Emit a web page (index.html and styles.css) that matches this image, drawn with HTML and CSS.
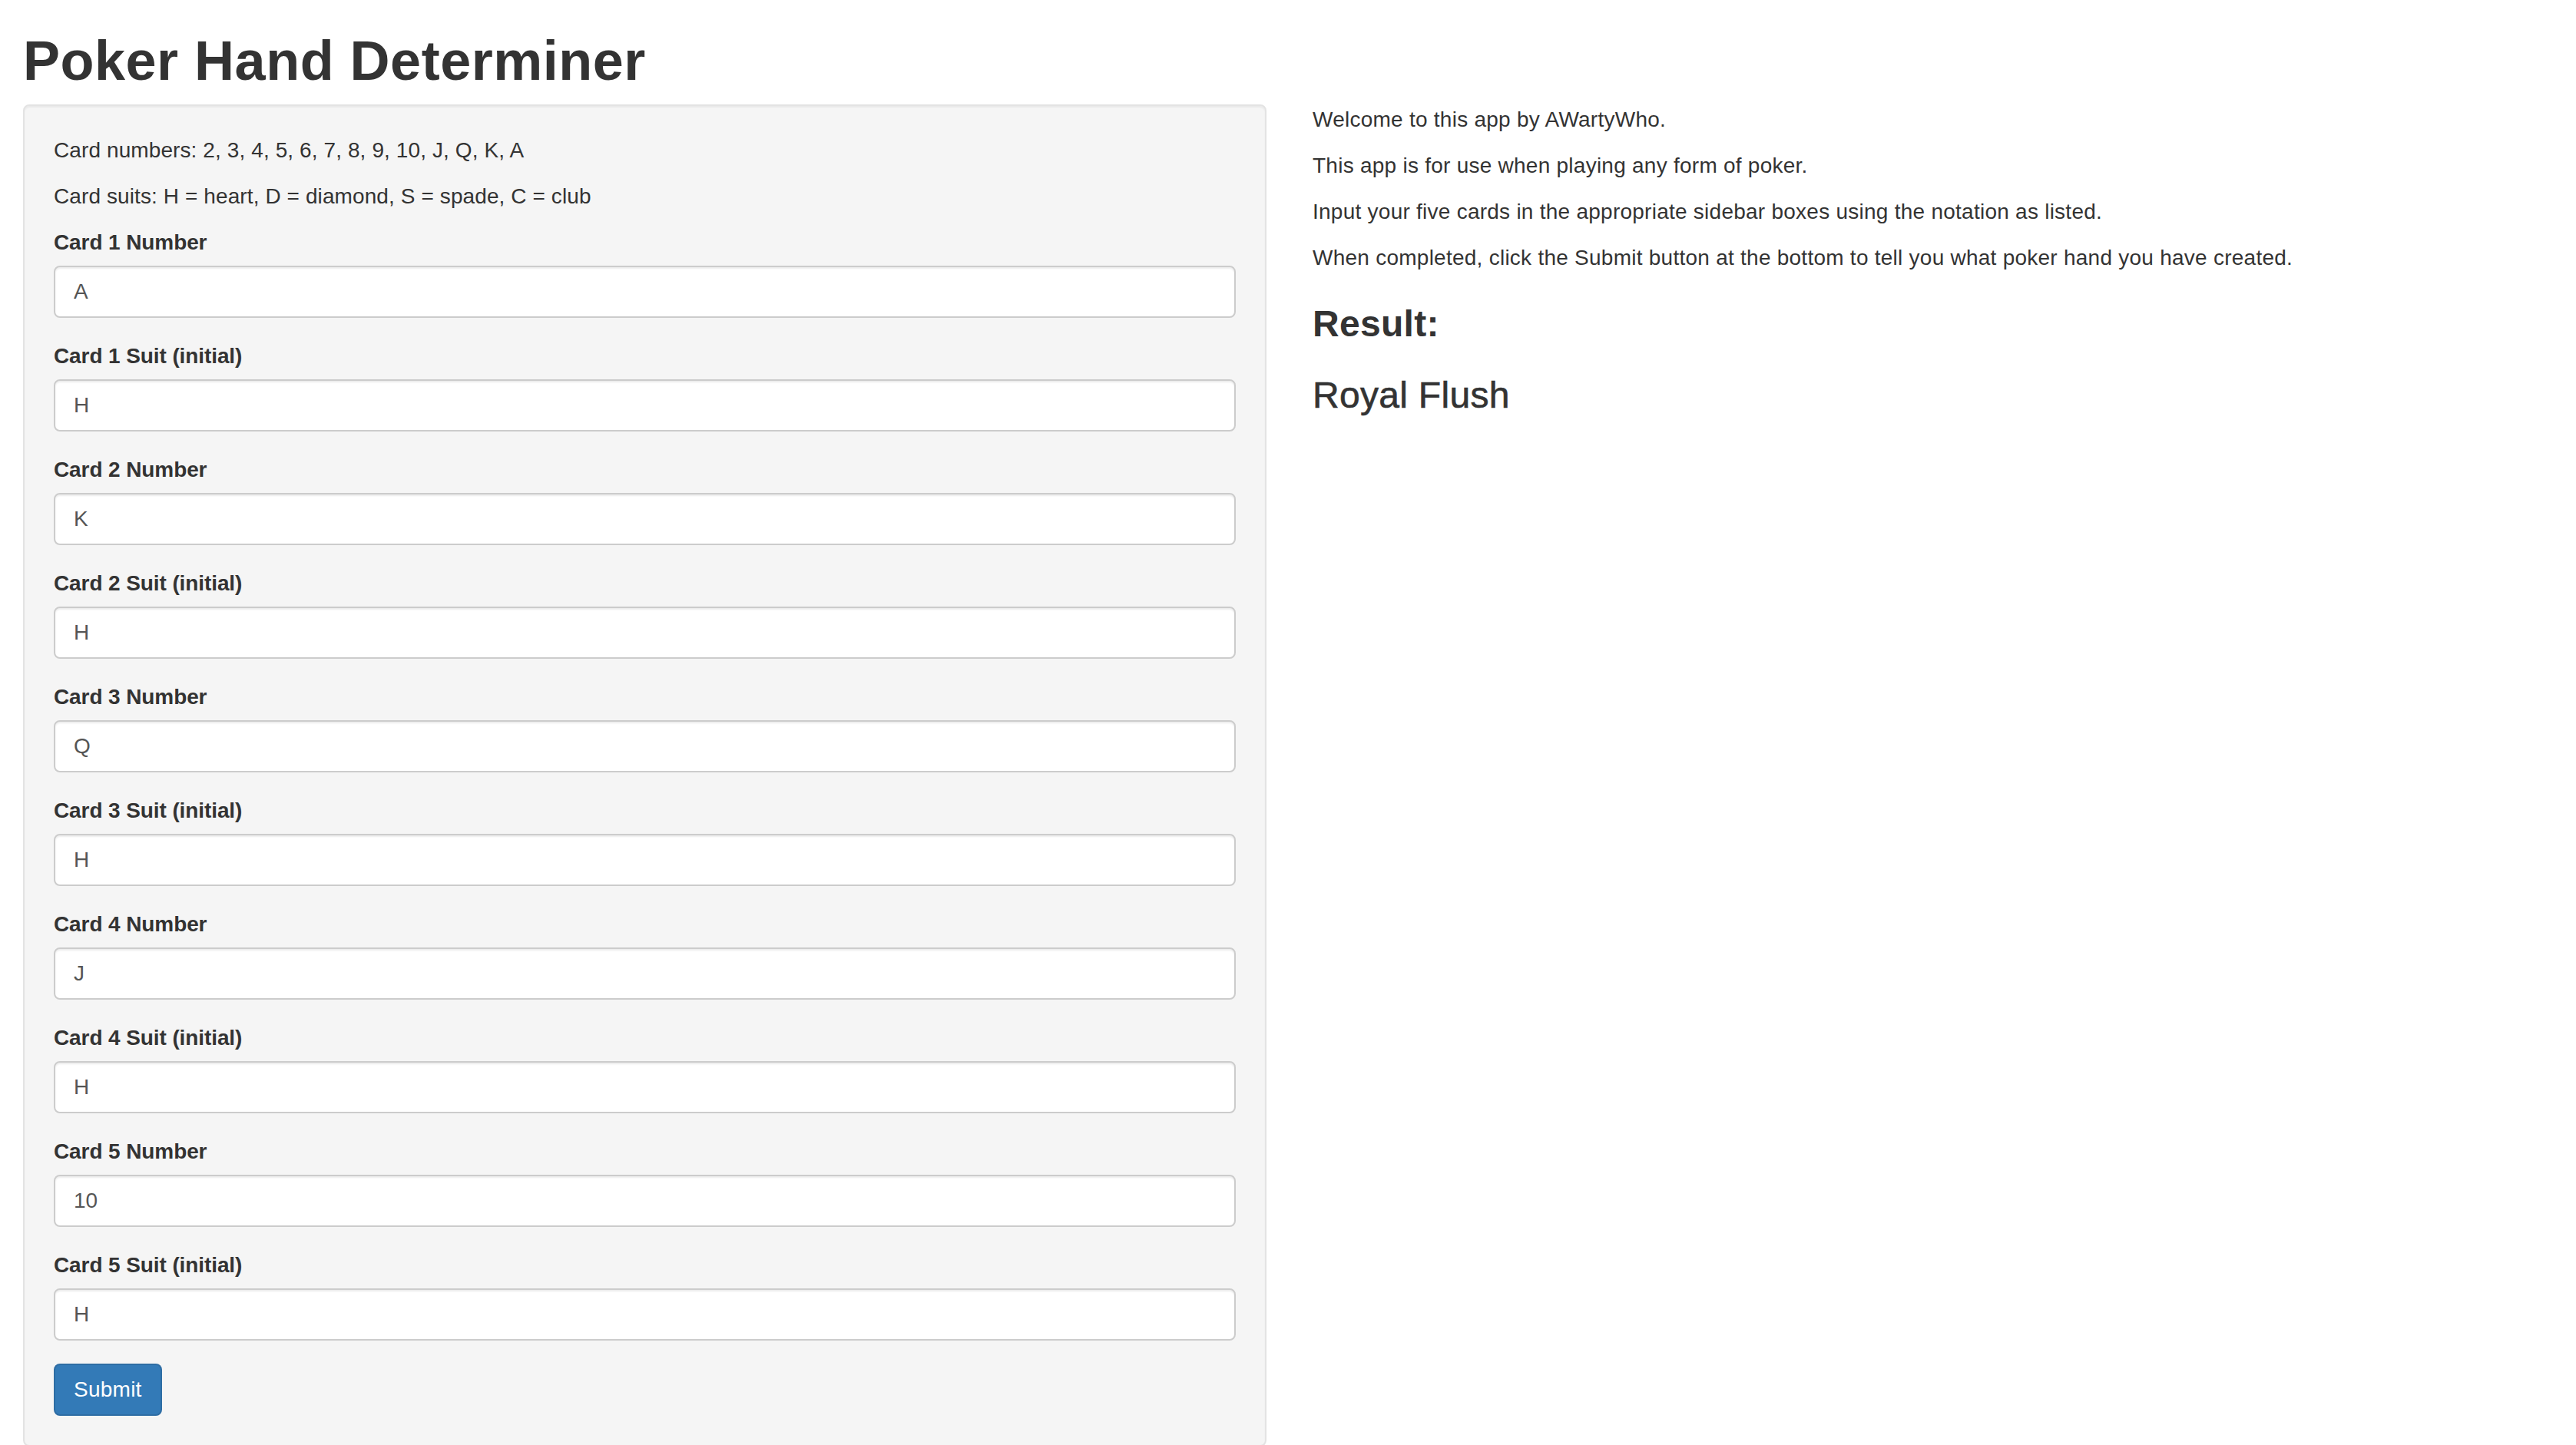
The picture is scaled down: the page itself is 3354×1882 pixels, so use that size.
FILE: index.html
```html
<!DOCTYPE html>
<html lang="en">
<head>
<meta charset="utf-8">
<title>Poker Hand Determiner</title>
<link rel="stylesheet" href="styles.css">
</head>
<body>
<div class="container">
  <h1 class="title">Poker Hand Determiner</h1>
  <div class="row">
    <div class="sidebar">
      <form class="well">
        <p>Card numbers: 2, 3, 4, 5, 6, 7, 8, 9, 10, J, Q, K, A</p>
        <p>Card suits: H = heart, D = diamond, S = spade, C = club</p>
        <div class="form-group"><label class="control-label">Card 1 Number</label><input class="form-control" type="text" value="A"></div>
        <div class="form-group"><label class="control-label">Card 1 Suit (initial)</label><input class="form-control" type="text" value="H"></div>
        <div class="form-group"><label class="control-label">Card 2 Number</label><input class="form-control" type="text" value="K"></div>
        <div class="form-group"><label class="control-label">Card 2 Suit (initial)</label><input class="form-control" type="text" value="H"></div>
        <div class="form-group"><label class="control-label">Card 3 Number</label><input class="form-control" type="text" value="Q"></div>
        <div class="form-group"><label class="control-label">Card 3 Suit (initial)</label><input class="form-control" type="text" value="H"></div>
        <div class="form-group"><label class="control-label">Card 4 Number</label><input class="form-control" type="text" value="J"></div>
        <div class="form-group"><label class="control-label">Card 4 Suit (initial)</label><input class="form-control" type="text" value="H"></div>
        <div class="form-group"><label class="control-label">Card 5 Number</label><input class="form-control" type="text" value="10"></div>
        <div class="form-group"><label class="control-label">Card 5 Suit (initial)</label><input class="form-control" type="text" value="H"></div>
        <button type="button" class="btn">Submit</button>
      </form>
    </div>
    <div class="main">
      <p>Welcome to this app by AWartyWho.</p>
      <p>This app is for use when playing any form of poker.</p>
      <p>Input your five cards in the appropriate sidebar boxes using the notation as listed.</p>
      <p>When completed, click the Submit button at the bottom to tell you what poker hand you have created.</p>
      <h3 class="result-label">Result:</h3>
      <h3 class="result-value">Royal Flush</h3>
    </div>
  </div>
</div>
</body>
</html>
```

FILE: styles.css
```css
html {
  overflow: hidden;
}

body {
  margin: 0;
  font-family: "Liberation Sans", Arial, Helvetica, sans-serif;
  font-size: 28px;
  line-height: 1.42857;
  letter-spacing: 0.25px;
  color: #333;
  background: #fff;
}

.container {
  padding: 0 30px;
}

.title {
  margin: 40px 0 17px;
  font-size: 72px;
  font-weight: 700;
  line-height: 1.1;
  letter-spacing: 0.5px;
  color: #333;
}

.row {
  display: grid;
  grid-template-columns: 1619px 1fr;
  column-gap: 60px;
}

p {
  margin: 0 0 20px;
}

.well {
  display: block;
  margin: 0;
  padding: 38px;
  background: #f5f5f5;
  border: 2px solid #e3e3e3;
  border-radius: 8px;
  box-shadow: inset 0 2px 2px rgba(0, 0, 0, 0.05);
}

.well p {
  letter-spacing: 0.1px;
}

.form-group {
  margin-bottom: 30px;
}

.control-label {
  display: inline-block;
  margin-bottom: 10px;
  font-weight: 700;
  letter-spacing: -0.1px;
}

.form-control {
  display: block;
  box-sizing: border-box;
  width: 100%;
  height: 68px;
  margin: 0;
  padding: 12px 24px;
  font-family: inherit;
  font-size: 28px;
  line-height: 1.42857;
  color: #555;
  background: #fff;
  border: 2px solid #ccc;
  border-radius: 8px;
  box-shadow: inset 0 2px 2px rgba(0, 0, 0, 0.075);
  outline: none;
}

.btn {
  display: inline-block;
  box-sizing: border-box;
  height: 68px;
  margin: 0;
  padding: 12px 24px;
  font-family: inherit;
  font-size: 28px;
  line-height: 1.42857;
  letter-spacing: 0.25px;
  color: #fff;
  background: #337ab7;
  border: 2px solid #2e6da4;
  border-radius: 8px;
  cursor: pointer;
}

.main h3 {
  margin: 40px 0 20px;
  font-size: 48px;
  line-height: 1.1;
  letter-spacing: 0.3px;
  color: #333;
}

.result-label {
  font-weight: 700;
}

.result-value {
  font-weight: 500;
  -webkit-text-stroke: 0.6px #333;
}
```
